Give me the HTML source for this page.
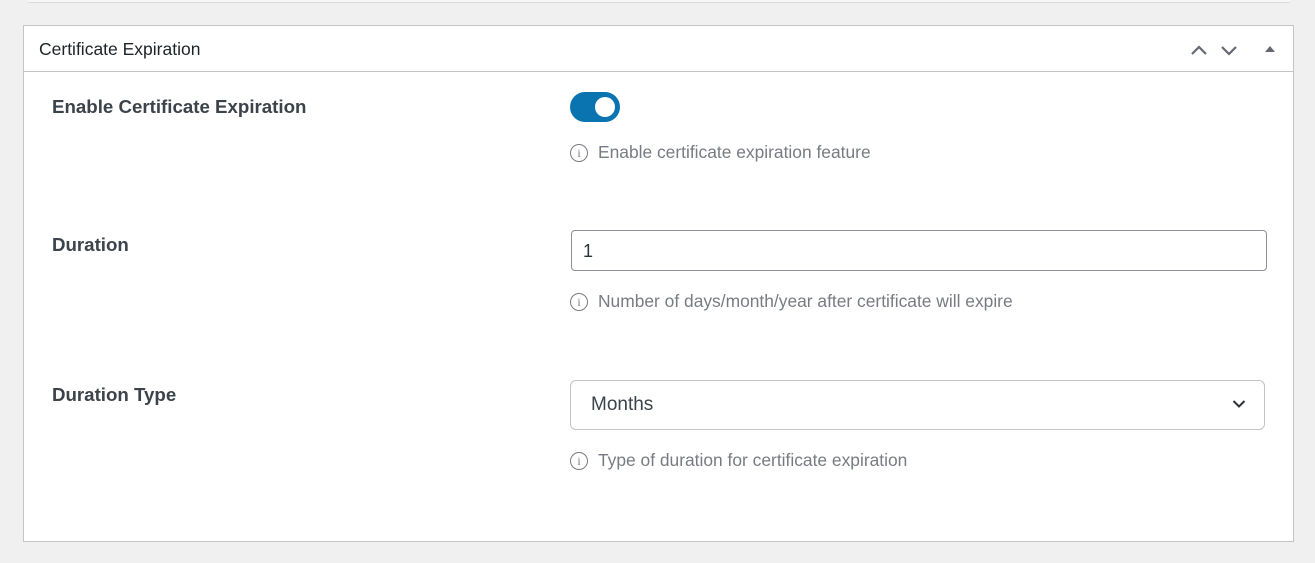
<!DOCTYPE html>
<html><head><style>
body{margin:0;width:1315px;height:563px;background:#f0f0f1;font-family:"Liberation Sans",sans-serif;position:relative;overflow:hidden}
.top{position:absolute;left:28px;top:-5px;width:1262px;height:7px;background:#f6f7f7;border-bottom:1px solid #dcdcde}
.panel{position:absolute;left:23px;top:25px;width:1269px;height:515px;background:#fff;border:1px solid #c3c4c7}
.hdr{position:absolute;left:0;top:0;width:100%;height:45px;border-bottom:1px solid #c3c4c7}
.hdr span{position:absolute;left:15px;top:13px;font-size:17.5px;color:#1d2327}
.lbl{position:absolute;left:28px;font-size:18.7px;font-weight:bold;color:#3c434a}
.help{position:absolute;left:546px;font-size:17.4px;color:#787c82;display:flex;align-items:center}
.help i{display:inline-block;width:18px;height:18px;border:1.5px solid #787c82;border-radius:50%;margin-right:10px;font-style:normal;font-size:12px;text-align:center;line-height:16px;box-sizing:border-box;font-family:"Liberation Serif",serif}
.tog{position:absolute;left:546px;top:66px;width:50px;height:30px;border-radius:15px;background:#0a74b0}
.tog:after{content:"";position:absolute;right:5px;top:5px;width:20px;height:20px;border-radius:50%;background:#fff}
.inp{position:absolute;left:547px;top:204px;width:694px;height:39px;border:1px solid #8c8f94;border-radius:4px;font-size:18px;color:#2c3338}
.sel{position:absolute;left:546px;top:354px;width:693px;height:48px;border:1px solid #c3c4c7;border-radius:6px;font-size:19px;color:#3c434a}
</style></head><body>
<div class="top"></div>
<div class="panel">
<div class="hdr"><span>Certificate Expiration</span>
<svg style="position:absolute;left:1166px;top:16px" width="90" height="16"><path d="M2 12 L9 5 L16 12" fill="none" stroke="#646970" stroke-width="2.2"/><path d="M32 5 L39 12 L46 5" fill="none" stroke="#646970" stroke-width="2.2"/><path d="M75 10 L80 4 L85 10Z" fill="#646970"/></svg></div>
<div class="lbl" style="top:70px">Enable Certificate Expiration</div>
<div class="tog"></div>
<div class="help" style="top:116px"><i>i</i>Enable certificate expiration feature</div>
<div class="lbl" style="top:208px">Duration</div>
<div class="inp"><span style="position:absolute;left:11px;top:10px">1</span></div>
<div class="help" style="top:265px"><i>i</i>Number of days/month/year after certificate will expire</div>
<div class="lbl" style="top:358px">Duration Type</div>
<div class="sel"><span style="position:absolute;left:20px;top:13px">Months</span>
<svg style="position:absolute;right:18px;top:18px" width="14" height="10"><path d="M1.5 2 L7 7.5 L12.5 2" fill="none" stroke="#2c3338" stroke-width="2"/></svg></div>
<div class="help" style="top:424px"><i>i</i>Type of duration for certificate expiration</div>
</div>
</body></html>
